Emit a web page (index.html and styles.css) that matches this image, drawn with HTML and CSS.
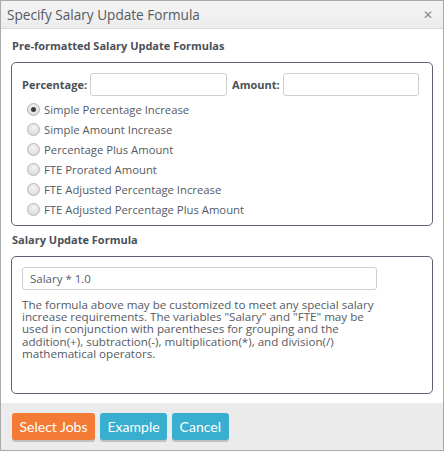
FILE: index.html
```html
<!DOCTYPE html>
<html>
<head>
<meta charset="utf-8">
<link rel="stylesheet" href="styles.css">
</head>
<body>
<div class="dialog">
  <div class="titlebar">
    <span class="title">Specify Salary Update Formula</span>
    <span class="close">&#x2715;</span>
  </div>
  <div class="content">
    <div class="heading">Pre-formatted Salary Update Formulas</div>
    <div class="box box-pre">
      <div class="fields">
        <label class="lbl">Percentage:</label>
        <input class="txt" type="text">
        <label class="lbl">Amount:</label>
        <input class="txt" type="text">
      </div>
      <div class="radios">
        <label class="radio"><span class="dot checked"></span>Simple Percentage Increase</label>
        <label class="radio"><span class="dot"></span>Simple Amount Increase</label>
        <label class="radio"><span class="dot"></span>Percentage Plus Amount</label>
        <label class="radio"><span class="dot"></span>FTE Prorated Amount</label>
        <label class="radio"><span class="dot"></span>FTE Adjusted Percentage Increase</label>
        <label class="radio"><span class="dot"></span>FTE Adjusted Percentage Plus Amount</label>
      </div>
    </div>
    <div class="heading heading2">Salary Update Formula</div>
    <div class="box box-formula">
      <input class="formula" type="text" value="Salary * 1.0">
      <p class="note">The formula above may be customized to meet any special salary increase requirements. The variables "Salary" and "FTE" may be used in conjunction with parentheses for grouping and the addition(+), subtraction(-), multiplication(*), and division(/) mathematical operators.</p>
    </div>
  </div>
  <div class="footer">
    <button class="btn btn-orange">Select Jobs</button>
    <button class="btn btn-blue">Example</button>
    <button class="btn btn-blue">Cancel</button>
  </div>
</div>
</body>
</html>
```
FILE: styles.css
```css
html, body {
  margin: 0;
  padding: 0;
  background: #ffffff;
}
.dialog {
  width: 444px;
  height: 451px;
  box-sizing: border-box;
  border: 1px solid #a9a9a9;
  display: flex;
  flex-direction: column;
  font-family: "Open Sans", "DejaVu Sans", sans-serif;
  color: #555555;
  background: #ffffff;
}
.titlebar {
  height: 27px;
  flex: none;
  background: linear-gradient(#f4f4f4, #ececec);
  border-bottom: 1px solid #d8d8d8;
  display: flex;
  align-items: center;
  justify-content: space-between;
  padding: 0 10px 0 6px;
}
.title {
  font-size: 13.6px;
  color: #555a63;
}
.close {
  font-size: 12px;
  color: #8a8a8a;
}
.content {
  flex: 1;
  padding: 0 10px 0 10px;
}
.heading {
  font-size: 11px;
  font-weight: bold;
  color: #4a4f57;
  margin-top: 9px;
  height: 15px;
  line-height: 15px;
  padding-left: 1px;
}
.heading2 {
  margin-top: 6px;
}
.box {
  border: 1px solid #5b6270;
  border-radius: 5px;
  box-sizing: border-box;
}
.box-pre {
  margin-top: 9px;
  height: 164px;
  padding: 10px 10px 0 10px;
}
.fields {
  display: flex;
  align-items: center;
  gap: 3px;
}
.lbl {
  font-size: 11px;
  font-weight: bold;
  color: #4a4f57;
}
.txt {
  width: 137px;
  height: 23px;
  box-sizing: border-box;
  border: 1px solid #cfcfcf;
  border-radius: 3px;
  margin: 0 2px 0 0;
  padding: 0 6px;
}
.fields .txt:last-child {
  width: 136px;
}
.radios {
  margin-top: 3px;
  padding-left: 5px;
  display: flex;
  flex-direction: column;
}
.radio {
  height: 20px;
  display: flex;
  align-items: center;
  font-size: 11.3px;
  color: #555a63;
}
.dot {
  width: 11px;
  height: 11px;
  border-radius: 50%;
  border: 1px solid #b5b5b5;
  background: radial-gradient(circle at 50% 35%, #f4f4f4, #d6d6d6);
  margin-right: 4px;
  position: relative;
  flex: none;
}
.dot.checked::after {
  content: "";
  position: absolute;
  left: 3px;
  top: 3px;
  width: 5px;
  height: 5px;
  border-radius: 50%;
  background: #3f3f3f;
}
.box-formula {
  margin-top: 9px;
  height: 138px;
  padding: 10px 10px 0 10px;
}
.formula {
  width: 355px;
  height: 23px;
  box-sizing: border-box;
  border: 1px solid #cfcfcf;
  border-radius: 3px;
  padding: 0 7px;
  font-family: "Open Sans", "DejaVu Sans", sans-serif;
  font-size: 11.5px;
  color: #555a63;
  display: block;
}
.note {
  margin: 9px 0 0 0;
  width: 354px;
  font-size: 11.6px;
  line-height: 12.2px;
  color: #555a63;
}
.footer {
  flex: none;
  height: 47px;
  background: #ebebeb;
  display: flex;
  align-items: flex-start;
  gap: 5px;
  padding: 10px 0 0 11px;
  box-sizing: border-box;
}
.btn {
  height: 27px;
  border: none;
  border-radius: 3px;
  color: #ffffff;
  font-family: "Lato", "Open Sans", sans-serif;
  font-size: 14px;
  padding: 0 7.5px;
  box-shadow: 0 2px 0 rgba(0, 0, 0, 0.18);
}
.btn-orange {
  background: #f47b35;
}
.btn-blue {
  background: #38afcf;
}
```
